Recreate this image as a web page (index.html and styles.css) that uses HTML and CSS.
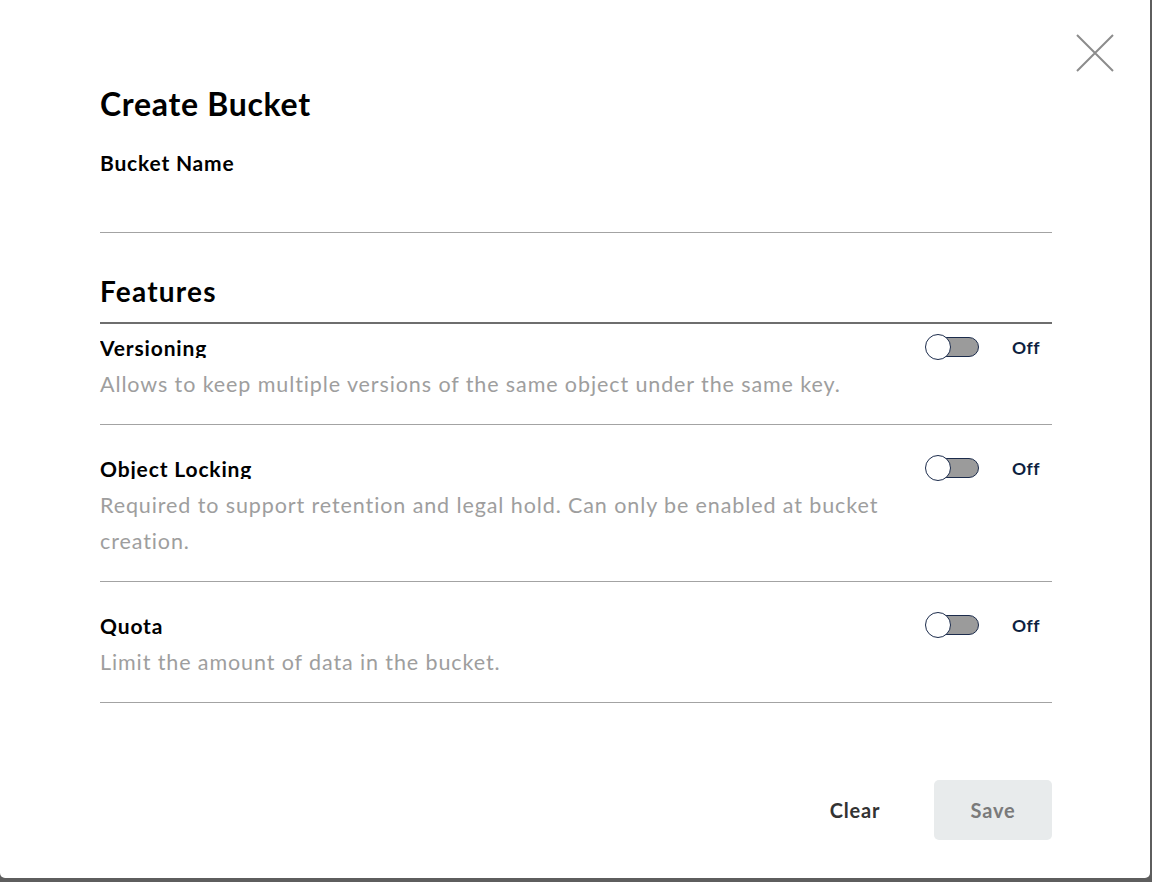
FILE: index.html
```html
<!DOCTYPE html>
<html lang="en">
<head>
<meta charset="utf-8">
<title>Create Bucket</title>
<link rel="stylesheet" href="styles.css">
</head>
<body>
<div class="modal">
  <button class="close" aria-label="Close">
    <svg width="40" height="40" viewBox="0 0 40 40"><path d="M2 2 L38 38 M38 2 L2 38" stroke="#8c8c8c" stroke-width="2" fill="none"/></svg>
  </button>
  <h1 class="title">Create Bucket</h1>
  <label class="field-label">Bucket Name</label>
  <div class="field-input"></div>

  <h2 class="section-title">Features</h2>
  <div class="features">
    <div class="feature">
      <div class="feature-text">
        <div class="feature-title">Versioning</div>
        <div class="feature-desc">Allows to keep multiple versions of the same object under the same key.</div>
      </div>
      <div class="feature-control">
        <span class="switch"><span class="switch-track"></span><span class="switch-knob"></span></span>
        <span class="switch-label">Off</span>
      </div>
    </div>
    <div class="feature">
      <div class="feature-text">
        <div class="feature-title">Object Locking</div>
        <div class="feature-desc">Required to support retention and legal hold. Can only be enabled at bucket creation.</div>
      </div>
      <div class="feature-control">
        <span class="switch"><span class="switch-track"></span><span class="switch-knob"></span></span>
        <span class="switch-label">Off</span>
      </div>
    </div>
    <div class="feature">
      <div class="feature-text">
        <div class="feature-title">Quota</div>
        <div class="feature-desc">Limit the amount of data in the bucket.</div>
      </div>
      <div class="feature-control">
        <span class="switch"><span class="switch-track"></span><span class="switch-knob"></span></span>
        <span class="switch-label">Off</span>
      </div>
    </div>
  </div>

  <div class="actions">
    <button class="btn btn-clear">Clear</button>
    <button class="btn btn-save">Save</button>
  </div>
</div>
</body>
</html>
```

FILE: styles.css
```css
html, body {
  margin: 0;
  padding: 0;
}
body {
  background: #5e5e5e;
  font-family: Lato, "Open Sans", sans-serif;
  width: 1152px;
  height: 882px;
  overflow: hidden;
}
.modal {
  position: relative;
  box-sizing: border-box;
  width: 1150px;
  height: 878px;
  background: #ffffff;
  border-radius: 0 0 5px 5px;
  padding: 85px 98px 0 100px;
}
.close {
  position: absolute;
  top: 33px;
  right: 35px;
  width: 40px;
  height: 40px;
  padding: 0;
  border: none;
  background: transparent;
}
.close svg {
  display: block;
}
.title {
  margin: 0;
  font-size: 32px;
  line-height: 38px;
  font-weight: 700;
  letter-spacing: 0.7px;
  color: #000;
}
.field-label {
  display: block;
  margin-top: 28px;
  font-size: 21px;
  line-height: 24px;
  font-weight: 700;
  letter-spacing: 0.8px;
  color: #000;
}
.field-input {
  height: 57px;
  border-bottom: 1px solid #a3a3a3;
}
.section-title {
  margin: 41px 0 0;
  font-size: 28px;
  line-height: 34px;
  font-weight: 700;
  letter-spacing: 1.2px;
  color: #000;
  padding-bottom: 14px;
  border-bottom: 2px solid #6e6e6e;
}
.feature {
  display: flex;
  align-items: flex-start;
  padding: 33px 0 22px;
  border-bottom: 1px solid #a3a3a3;
}
.feature:first-child {
  padding-top: 13px;
}
.feature-text {
  flex: 1;
  padding-right: 30px;
}
.feature-title {
  font-size: 21px;
  line-height: 21px;
  height: 21px;
  overflow: hidden;
  font-weight: 700;
  letter-spacing: 0.85px;
  color: #000;
}
.feature-desc {
  margin-top: 8px;
  font-size: 21.5px;
  line-height: 36px;
  letter-spacing: 0.9px;
  color: #9e9e9e;
}
.feature-control {
  display: flex;
  align-items: center;
  margin-top: -3px;
  padding-right: 12px;
}
.switch {
  position: relative;
  display: block;
  width: 54px;
  height: 26px;
}
.switch-track {
  position: absolute;
  left: 4px;
  top: 3px;
  width: 50px;
  height: 20px;
  box-sizing: border-box;
  border-radius: 10px;
  background: #9b9b9b;
  border: 1.5px solid #1c2c4c;
}
.switch-knob {
  position: absolute;
  left: 0;
  top: 0;
  width: 26px;
  height: 26px;
  box-sizing: border-box;
  border-radius: 50%;
  background: #ffffff;
  border: 1.5px solid #1c2c4c;
}
.switch-label {
  margin-left: 33px;
  font-size: 17.5px;
  font-weight: 700;
  letter-spacing: 0.5px;
  color: #0d1f40;
}
.actions {
  display: flex;
  justify-content: flex-end;
  gap: 20px;
  margin-top: 77px;
}
.btn {
  width: 118px;
  height: 60px;
  border: none;
  border-radius: 5px;
  font-family: Lato, "Open Sans", sans-serif;
  font-size: 20px;
  font-weight: 700;
  letter-spacing: 0.8px;
  padding: 0;
}
.btn-clear {
  background: transparent;
  color: #333333;
}
.btn-save {
  background: #e8ebec;
  color: #7a7a7a;
}
```
